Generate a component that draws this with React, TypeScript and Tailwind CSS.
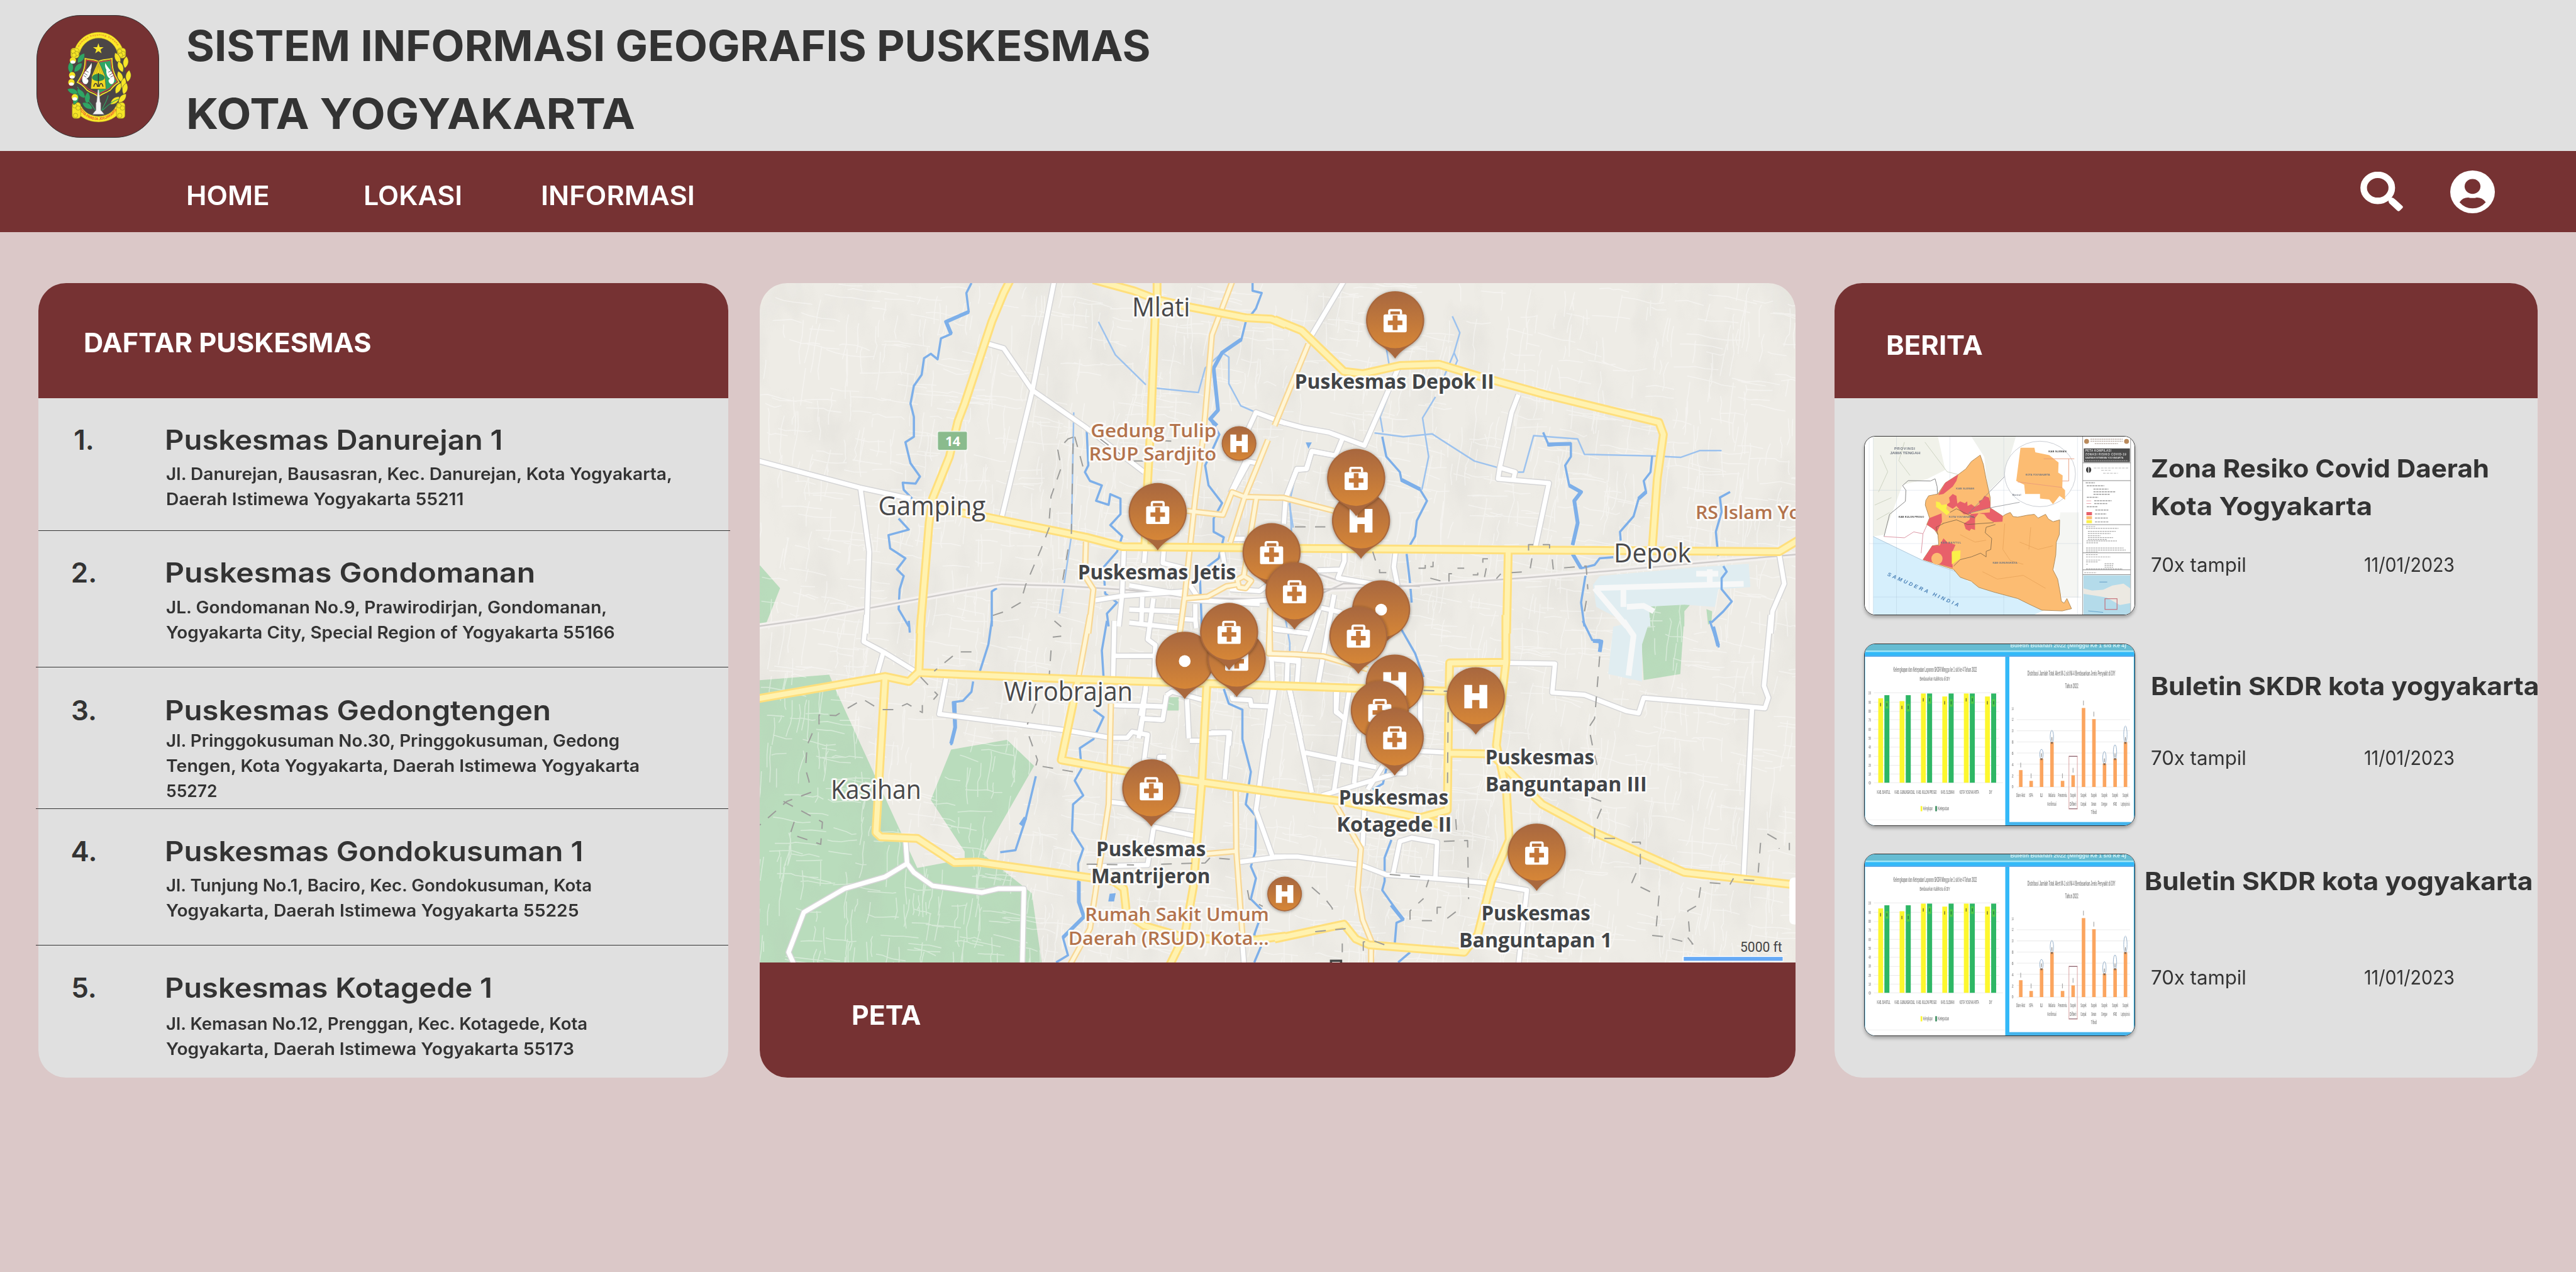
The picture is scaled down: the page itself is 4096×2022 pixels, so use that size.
import { useLayoutEffect, useRef, useState } from "react";

/* One line of text widened so that its ink spans `w` pixels. */
const FitText = ({ w, children }: { w: number; children: string }) => {
  const ref = useRef<HTMLDivElement>(null);
  const [scale, setScale] = useState(1);
  useLayoutEffect(() => {
    const ctx = document.createElement("canvas").getContext("2d");
    if (!ctx || !ref.current) return;
    const cs = getComputedStyle(ref.current);
    ctx.font = `${cs.fontWeight} ${cs.fontSize} Inter`;
    const m = ctx.measureText(children);
    setScale(w / (m.actualBoundingBoxRight + m.actualBoundingBoxLeft));
  }, [w, children]);
  return (
    <div ref={ref} className="w-max origin-left whitespace-nowrap" style={{ transform: `scaleX(${scale})` }}>
      {children}
    </div>
  );
};

/* ---------- emblem ---------- */

const Leaf = ({ x, y, r, fill = "#f5e427" }: { x: number; y: number; r: number; fill?: string }) => (
  <path
    d="M0,-32 C20,-12 18,14 0,32 C-18,14 -20,-12 0,-32 Z"
    transform={`translate(${x} ${y}) rotate(${r})`}
    fill={fill}
    stroke="#4a4640"
    strokeWidth="2"
  />
);

const Curl = ({ x, y, h }: { x: number; y: number; h: number }) => (
  <g fill="#f5e427" stroke="#8c8420" strokeWidth="2">
    <rect x={x - 22} y={y} width="46" height={h} rx="16" />
    <circle cx={x - 8} cy={y + 18} r="12" />
    <circle cx={x + 10} cy={y + 30} r="12" />
    <circle cx={x - 4} cy={y + h - 16} r="12" />
  </g>
);

const Emblem = () => (
  <svg viewBox="193 100 365 500" className="h-[148px] w-[108px]">
    <ellipse cx="378" cy="350" rx="146" ry="236" fill="#4b4646" />
    <path d="M252,196 C300,82 456,82 506,196 L480,222 C450,116 306,116 276,222 Z" fill="#fbe92a" stroke="#a99a20" strokeWidth="2" />
    <path d="M262,490 L286,510 C320,580 436,580 470,510 L494,490 L500,530 C450,614 306,614 254,530 Z" fill="#fbe92a" stroke="#a99a20" strokeWidth="2" />
    <path id="ribbonTop" d="M272,192 C312,108 444,108 484,192" fill="none" />
    <path id="ribbonBottom" d="M276,524 C312,602 440,602 478,524" fill="none" />
    <text fontFamily="Liberation Sans, sans-serif" fontSize="15" fontWeight="700" fill="#e8862c">
      <textPath href="#ribbonTop" textLength="250">mamayu hayuning bawana</textPath>
    </text>
    <text fontFamily="Liberation Sans, sans-serif" fontSize="20" fontWeight="700" fill="#ea4b2a">
      <textPath href="#ribbonBottom" textLength="244" lengthAdjust="spacingAndGlyphs">KOTA PRADJA JOGJAKARTA</textPath>
    </text>
    <Curl x={250} y={196} h={54} />
    <Curl x={500} y={196} h={54} />
    <Curl x={258} y={488} h={86} />
    <Curl x={496} y={488} h={86} />
    <path d="M377,170 L384,191 L405,191 L388,204 L394,224 L377,212 L360,224 L366,204 L348,191 L370,191 Z" fill="#fbe92a" />
    {[
      [480, 250, -25], [524, 272, 8], [496, 296, -22], [538, 346, 8], [494, 350, -20], [512, 386, 10],
      [484, 412, 25], [520, 414, 14], [506, 466, 40], [466, 478, 50],
    ].map(([x, y, r], i) => <Leaf key={i} x={x} y={y} r={r} />)}
    {[
      [284, 250, 35], [228, 300, 0], [268, 300, 40], [240, 428, -70], [284, 440, -40], [318, 464, 5], [318, 506, -60], [256, 470, 20],
    ].map(([x, y, r], i) => <Leaf key={i} x={x} y={y} r={r} fill="#2fa564" />)}
    {[[240, 266], [236, 346], [232, 384], [250, 464]].map(([x, y], i) => (
      <g key={i}>
        <circle cx={x} cy={y - 4} r="17" fill="#f5e427" />
        <ellipse cx={x} cy={y + 5} rx="13" ry="9" fill="#fff" />
      </g>
    ))}
    <path d="M264,404 C300,460 340,490 360,530 M486,470 C450,480 420,510 400,530 M430,450 C420,490 400,510 396,532" fill="none" stroke="#2fa564" strokeWidth="4" />
    <path d="M306,252 C330,260 355,255 377,268 C400,255 425,260 450,252 C450,300 456,330 488,380 C450,400 440,430 436,424 C415,440 390,440 377,460 C364,440 340,440 318,424 C310,420 300,395 264,380 C298,330 306,300 306,252 Z" fill="#4b4646" stroke="#f5e427" strokeWidth="6" />
    <path d="M377,272 C400,262 425,266 444,260 C445,305 450,335 478,376 C444,396 440,418 430,418 C410,430 388,432 377,448 Z" fill="#2fa564" />
    <path d="M312,260 C334,268 355,264 377,274 C400,264 425,268 444,260 C445,305 450,335 478,376 C444,396 438,418 430,416 C410,430 388,432 377,448 C364,432 342,430 324,416 C318,416 304,390 274,376 C306,335 312,300 312,260 Z" fill="none" stroke="#e03a3e" strokeWidth="4" />
    <path d="M340,276 C330,300 300,320 292,350 C286,366 292,392 312,390 C328,380 326,360 312,362 C332,352 336,330 336,312 C342,300 342,288 340,276 Z" fill="#fff" />
    <path d="M414,276 C424,300 452,320 460,350 C466,366 462,392 444,390 C428,380 428,360 442,362 C422,352 418,330 420,312 C412,300 412,288 414,276 Z" fill="#fff" />
    <path d="M300,330 L318,342 M298,344 L312,352 M306,316 L324,326 M454,330 L436,342 M458,344 L442,352 M448,316 L430,326" stroke="#4b4646" strokeWidth="3" />
    <path d="M377,264 L412,344 L418,416 L336,416 L342,344 Z" fill="#f0d822" stroke="#4b4646" strokeWidth="2" />
    <path d="M377,280 L400,336 M377,280 L354,336 M377,290 L388,336 M377,290 L366,336" stroke="#a3921d" strokeWidth="2" />
    <ellipse cx="377" cy="354" rx="34" ry="20" fill="#2b8a52" />
    <path d="M377,330 V404 M352,404 C356,380 370,380 372,404 M382,404 C384,380 398,380 402,404" fill="none" stroke="#3b3630" strokeWidth="5" />
    <path d="M374,420 L380,420 L386,486 L390,490 L390,530 L398,538 L408,552 L346,552 L356,538 L364,530 L364,490 L368,486 Z" fill="#f2f2f2" stroke="#8a8a8a" strokeWidth="2" />
  </svg>
);

/* ---------- map ---------- */

/* The map's line work is digitised in five sheets, each with its own local grid. */
const TILES: Record<string, string> = {
  a: "translate(1350 500) scale(.6059 .3954)",
  b: "translate(2280 500) scale(.6059 .3954)",
  c: "translate(1350 1110) scale(.6059 .5293)",
  d: "translate(2280 1110) scale(.6059 .5293)",
  e: "translate(2020 800) scale(.3333)",
};

type Layer = Record<string, string>;

const GREEN: Layer = {
  a: "M0,1265 L75,1395 L35,1550 L0,1568 Z",
  b: "M1105,1478 L1165,1460 L1230,1465 L1210,1500 L1210,1568 L1108,1568 Z M1275,1490 L1292,1500 L1290,1550 L1280,1560 Z",
  c: "M0,202 L220,182 L240,235 L480,835 L620,805 L620,780 L520,605 L580,435 L745,402 L825,490 L675,790 L818,920 L848,1160 L0,1160 Z M1213,258 H1252 V303 H1213 Z",
  d: "M1110,-20 L1210,-20 L1198,180 L1090,200 L1083,60 Z",
};
const AIRPORT: Layer = {
  b: "M960,1340 L1250,1300 L1400,1285 L1405,1390 L1310,1400 L1300,1480 L1210,1470 L1105,1478 L1110,1568 L1060,1568 L950,1480 L940,1380 Z",
  d: "M1000,20 L1110,-10 L1085,80 L1085,205 L985,180 Z",
};
const POND: Layer = { c: "M1048,922 L1066,920 L1061,948 L1044,948 Z", b: "M92,736 H110 L100,765 Z" };
const RUNWAY: Layer = {
  b: "M945,1395 L1385,1375 M945,1395 L1040,1568 M1030,1395 L1030,1480 M1245,1330 H1310 M1285,1310 V1390 M1040,1480 L1090,1475 L1120,1500",
  d: "M1030,0 L1060,50 L1045,185",
};
const RIVER: Layer = {
  a: "M640,15 L625,60 L632,145 L565,190 L580,245 L550,265 L540,360 L520,335 L500,355 L493,430 L470,480 L460,560 L470,620 L470,710 L445,735 L460,830 L488,890 L475,922 L437,918 L440,950 L465,990 M425,1080 L455,1130 L395,1155 L400,1215 L445,1260 L420,1310 L440,1340 L428,1400 L425,1490 L455,1568 M1470,15 L1470,50 L1497,60 L1480,130 L1450,190 L1437,270 L1380,330 L1355,400 L1368,590 L1345,630 L1372,700 L1330,840 L1340,930 L1380,1010 L1355,1080 L1355,1140 L1385,1165 L1370,1260 L1335,1300 M980,670 L985,840 L975,870 L990,910 L1025,930 L1008,1000 L1045,1018 L1050,970 L1080,990 L1080,1060 L1050,1110 L1085,1160 L1070,1230 L1030,1300 L1035,1420 L1070,1460 L1040,1510 L1045,1568 M715,1395 L700,1410 L700,1568 M1315,1360 L1320,1568",
  b: "M318,710 L330,800 L370,870 L375,910 L430,950 L450,1000 L420,1090 L415,1160 L400,1200 M390,1240 L400,1370 L405,1460 M793,690 L810,750 L875,740 L875,800 L858,840 L870,930 L905,960 L885,1000 L895,1100 L880,1200 M880,1240 L905,1305 L945,1290 L960,1260 L1000,1255 M920,1320 L905,1460 L915,1568 M1115,795 L1110,870 L1090,910 L1097,960 L1075,990 L1060,1070 L1020,1140 L1022,1180 M1345,960 L1315,985 L1320,1050 L1303,1140 L1310,1250 M1325,1295 L1335,1320 L1320,1350 L1320,1400 L1350,1455 L1325,1500 L1290,1550",
  c: "M455,0 L458,40 M700,0 L690,80 L665,170 M645,205 L640,240 L615,270 L585,275 L590,360 L580,420 M1040,0 L1025,100 L1030,190 M1000,300 L1030,325 L1000,400 L960,430 L965,500 L945,540 L970,590 L940,620 L937,710 L970,770 L955,820 L957,950 L972,1000 L910,1070 L925,1130 L890,1154 M1385,230 L1400,280 L1440,300 L1440,400 L1465,510 L1450,620 L1480,660 L1478,780 L1465,830 L1480,870 L1465,940 L1500,980 L1475,1060 L1495,1100 L1475,1154 M830,525 L800,670 L770,775 L725,782",
  d: "M375,30 L415,110 L440,190 M330,500 L320,550 L290,570 M345,740 L325,800 L325,880 L318,910 L380,1010 L360,1020 L355,1090 M400,1120 L365,1154 M910,0 L938,65 L960,65 L960,105 M1285,0 L1312,90",
};
const RIVER_WIDE: Layer = {
  a: "M1437,270 L1380,330 L1355,400 L1368,590 L1345,630 L1365,660 M632,145 L565,190 L580,245",
  b: "M375,905 L430,948 M805,745 L875,742 M870,930 L905,960 L885,1000 L895,1100 L880,1200 M1097,960 L1075,990 M880,1240 L905,1305",
  c: "M590,275 L592,360 L580,415 M785,690 L800,665 M957,880 L957,950 L972,1000 L910,1070",
  d: "M940,68 L965,70 L960,105 M345,960 L380,1010 M1295,20 L1310,85",
};
const STREAM: Layer = {
  a: "M942,600 L935,1160 L900,1510 M1015,190 L1065,340 L1155,475 M1185,490 L1310,510 L1330,400 L1380,330 L1400,350 L1400,470 L1435,570 L1480,600",
  b: "M525,165 L547,240 L530,330 L500,440 M530,330 L540,365 L530,400 M475,530 L437,625 L455,800 L435,950 M330,310 L340,400 M340,510 L312,620 L320,690 M295,693 L380,710 L465,697 L590,820 L660,850 M715,870 L735,870 L765,705 L895,720 L915,790 L1115,797 L1200,803 L1255,773 L1320,773 M60,900 L45,1000 L50,1140",
  e: "M835,900 L862,1050 L860,1260 M860,300 L880,430",
};
const MAJOR: Layer = {
  a: "M755,0 L735,60 L700,190 L620,560 L600,640 L575,800 L525,990 L515,1100 L488,1600 M1000,0 L1120,50 L1188,90 L1290,125 L1450,172 L1525,178 L1568,205 M1188,0 L1188,90 L1182,180 L1170,640 L1160,920 L1152,1200 M520,1030 L690,1075 L980,1165 L1085,1207 L1560,1214",
  b: "M0,180 L80,230 L205,415 L260,425 L370,388 L485,382 L600,435 L800,520 L1135,645 L1148,700 L1130,900 L1115,1220 M0,1214 L690,1222 L1490,1230 L1560,1165 M690,1222 L685,1600",
  c: "M0,265 L385,188 L455,205 L485,172 L492,-20 M485,175 L955,198 L1568,220 M955,198 L905,470 L1050,500 L1320,545 L1568,585 M1335,215 L1320,545 L1295,900 L1270,1060 L1225,1164 M385,190 L358,715 L372,730 L480,735 L590,817 L660,815 L990,868 L1060,880 L1090,905 L1098,990 L1150,1030 L1270,1070 L1450,1082 L1568,1065",
  d: "M0,218 L250,228 L515,238 M683,-20 L683,140 L655,420 L685,580 L693,740 L640,880 L600,1060 L560,1120 L280,1095 L240,1075 L205,1025 L0,1075 M515,238 L517,142 L683,140 M515,238 L510,640 L430,665 M510,447 L640,450 L790,620 L945,715 L1210,850 L1560,895 M0,580 L200,610 L430,665 L490,690",
};
const MINOR: Layer = {
  a: "M1412,0 L1350,250 L1325,700 L1300,1000 L1270,1430 L1255,1600 M978,1185 L975,1340 L1000,1400 L985,1600",
  b: "M100,290 L0,660",
  c: "M990,-20 L955,198 M1052,280 L1045,620 L990,1040 L930,1164 M1420,570 L1422,780 L1440,1060 M1422,778 L1335,787 M1520,0 L1522,108",
  d: "M180,620 L255,770 L245,910 L260,1010 L285,1080 L285,1164",
  e: "M745,-40 L680,120 L620,265 L542,510 M620,265 L552,240 L503,362 L310,340 M620,265 L830,270 L1100,340 M682,275 L615,690 L580,710 L590,750 L625,755 L655,715 L615,690 M580,735 L520,745 L420,800 L300,810 M757,860 L748,1105 L900,1110 L1040,1120 L1280,1190",
};
const STREET: Layer = {
  a: "M885,0 L820,500 L730,1070 M690,290 L735,310 L820,500 L975,665 L1150,870 M0,815 L310,940 L460,990 M312,940 L338,1230 L330,1600 M1568,650 L1480,600 L1450,700 M1485,830 L1450,820 L1405,965 M1090,1220 L1085,1420 L1075,1568 M1005,1450 L1085,1430 L1270,1410",
  b: "M207,0 L110,250 M365,400 L265,750 L160,690 L85,670 L0,635 M200,720 L180,795 L110,775 L95,855 L65,860 L30,1000 M720,520 L700,600 L665,850 L710,870 L705,905 M665,850 L660,900 L810,920 L770,1210 M1490,1240 L1505,1375 L1470,1500 L1465,1600",
  c: "M330,-20 L322,70 L380,105 L480,175 M380,105 L360,185 M565,195 L545,315 L920,370 L1050,395 L1100,395 L1115,375 L1160,385 L1150,470 L1195,480 L1195,460 L1215,460 M1060,285 L1205,290 M1205,335 L1145,330 L1155,220 M1145,330 L1138,380 M1062,0 L1058,200 M1060,118 L1180,118 M1340,380 L1400,378 L1388,535 M1285,405 L1325,405 M1175,695 L1295,725 M1050,612 L1300,645 M1530,230 L1480,640 L1530,800 L1568,797 M1530,800 L1430,815 M1438,1060 L1445,1164 M445,740 L450,820 L385,865 L265,905 L145,985 L100,1120 L120,1170 M450,820 L470,850 L525,895 L670,918 L720,905 L795,905 L790,1164 M985,830 L1160,825 L1178,700",
  d: "M1465,-20 L1445,220 L1458,260 L1448,295 L1090,260 L1075,312 L1040,305 L915,250 L820,242 L828,145 L690,142 M1410,290 L1385,865 M45,235 L110,580 M90,445 L300,495 M250,380 L235,550 M430,440 L510,445 M0,797 L70,797 L255,825 L330,858 L470,870 L620,885 L745,910 L720,1164 M350,855 L370,745 L405,733 L480,748 L475,870 M140,590 L360,515 L385,515 L385,490 M220,240 L175,580 M430,230 L430,430 M265,640 L260,760 M0,30 L100,42 M0,130 L70,138 M185,240 L182,305 L205,330 M320,490 L275,570",
  e: "M0,870 L280,880 M70,800 L65,940 M0,940 L270,970 M130,810 L100,1030 L140,1060 L135,1240 M0,1118 L130,1118 M85,555 L80,620 M185,555 L180,620 L300,650 M0,740 L290,790 M290,920 L355,925 L355,840 M355,925 L360,970 M760,970 L970,1000 M1020,870 L940,1100 M1100,790 L1010,1290 M1030,860 L1140,885 M1155,560 L1155,610 L1120,700 L1360,740 M1430,560 L1420,640 L1440,740 M1010,660 L1130,655 M555,490 L620,490 M640,80 L555,235 M750,1130 L910,1140 L900,1270 M850,1140 L845,1270 M765,1140 L770,1270 M200,1330 L180,1460 L70,1455 L50,1560 M70,1385 L190,1390 M90,1290 L60,1440 M200,1330 L230,1310 L400,1355 M310,1350 L320,1560 M550,1330 L555,1350 L650,1355 L655,1385 L775,1390 M780,1300 L740,1560 M860,1300 L920,1560 M1110,1310 L1110,1420 L1160,1455 M980,20 L950,115 L900,115 L840,270 L830,410 M980,20 L1110,45 M500,560 L510,620 M540,760 L700,770 L740,740 M300,700 L380,820 M560,830 L740,820 M440,1530 L540,1530 L535,1600 M300,815 L700,840",
};
const RAIL: Layer = {
  a: "M0,1570 L180,1530 L620,1405 L730,1377 L920,1385 L1120,1405 L1280,1437 L1568,1448",
  b: "M-20,1440 L140,1400 L400,1385 L740,1348 L980,1318 L1560,1240",
  e: "M0,765 L310,805 L740,820 M1040,780 L1150,730 L1560,745 M1020,680 L1140,720",
};
const TRAIL: Layer = {
  a: "M940,712 L925,720 L895,770 L905,850 L875,980 L870,1080 M870,1120 L845,1220 L800,1380 L785,1460 L740,1500 L680,1530 M945,710 L970,850 M940,740 L935,1150 M925,1220 L905,1400 M1020,720 L1080,790 M1120,820 L1150,820 M1205,728 L1230,730",
  b: "M60,1118 H150 M750,1225 V1198 H812 V1225 M755,1305 L760,1260 M820,1265 L823,1310 M855,1303 L880,1300 L920,1295 L925,1400 M310,1310 V1325 H330 M425,1305 H445 V1290 M460,1298 H468 V1275 M515,1365 V1330 L525,1330 M460,1350 L490,1362 M615,1280 V1262 H630 M585,1335 H600 V1325 M620,1345 L625,1305 M655,1352 L668,1330 M700,1325 L730,1322 M290,1230 L298,1270 M540,1305 H560 M915,1500 L922,1440",
  c: "M640,105 L600,105 L530,170 M490,190 L540,250 L525,270 M190,350 V318 L240,320 L275,295 L320,265 L370,300 L410,300 L450,280 L495,310 V280 M170,380 L155,420 L150,500 L160,540 L165,580 L95,610 L15,690 M85,610 L200,680 L195,755 L105,720 L125,650 M885,0 L905,20 M880,55 L905,52 M875,100 L870,180 M830,280 L805,350 M810,390 L835,470 L830,490 M850,492 L940,510 M980,822 L1120,825 M1200,822 L1330,818 L1345,800 L1400,805 L1430,810 M1455,910 L1460,940 L1500,965",
  d: "M513,240 L510,640 M440,235 L510,238 M960,120 L945,330 L928,360 L940,430 L955,500 M500,745 L570,742 L573,940 M535,670 L538,720 M935,597 L965,610 M965,635 L950,675 M945,700 V735 H1025 M1055,748 H1080 V820 L1055,885 L1135,930 L1125,1060 M1115,1063 L1150,1067 L1235,1092 L1220,1070 M1435,750 L1428,850 M1455,720 L1485,740 L1490,770 M1520,750 V775 M1285,885 L1345,890 L1355,870 M1385,875 L1420,877 M1258,900 L1250,960 L1220,980 L1225,1050 M110,900 L150,940 L170,970 L175,1000 M400,1010 V980 L440,938 M480,990 V968 H500 M510,1005 L550,970 M435,1013 H465 M120,1050 L210,1040 M340,857 L430,865 M200,1090 V1120 M262,1115 V1085 L290,1080 L350,1105 M455,875 L448,900",
};

const Strokes = ({ layer, color, width, dash }: { layer: Layer; color: string; width: number; dash?: string }) => (
  <g fill="none" stroke={color} strokeWidth={width} strokeDasharray={dash} strokeLinejoin="round">
    {Object.entries(layer).map(([k, d]) => (
      <path key={k} d={d} transform={TILES[k]} vectorEffect="non-scaling-stroke" />
    ))}
  </g>
);
const Areas = ({ layer, color }: { layer: Layer; color: string }) => (
  <g fill={color}>
    {Object.entries(layer).map(([k, d]) => <path key={k} d={d} transform={TILES[k]} />)}
  </g>
);

/* faint residential streets */
const lanes = (() => {
  let s = 7;
  const rnd = () => (s = (s * 16807) % 2147483647) / 2147483647;
  let d = "";
  for (let i = 0; i < 2400; i++) {
    let x = 1359 + rnd() * 1853;
    let y = 506 + rnd() * 1215;
    const vertical = rnd() < 0.52;
    d += `M${x.toFixed(0)},${y.toFixed(0)}`;
    const n = 2 + Math.floor(rnd() * 3);
    for (let j = 0; j < n; j++) {
      const step = 6 + rnd() * 22;
      x += vertical ? -step * 0.1 + (rnd() - 0.5) * 8 : step;
      y += vertical ? step : step * 0.12 + (rnd() - 0.5) * 8;
      d += `L${x.toFixed(0)},${y.toFixed(0)}`;
    }
  }
  return d;
})();

type Kind = "kit" | "h" | "dot";
const PINS: [number, number, Kind][] = [
  [2495.7, 573, "kit"], [2434.7, 931, "h"], [2426, 855, "kit"], [2071, 916, "kit"],
  [2274.7, 987.7, "kit"], [2315.7, 1057.7, "kit"], [2470.7, 1090, "dot"], [2430, 1137, "kit"],
  [2119.3, 1182, "dot"], [2212.3, 1178.3, "kit"], [2198.7, 1130.3, "kit"], [2495, 1222.7, "h"],
  [2468.3, 1270, "kit"], [2495, 1319, "kit"], [2640, 1245.5, "h"], [2059.5, 1410, "kit"], [2749, 1525, "kit"],
];

const H = "M-20.5,-21 H-6.5 V-6 H6.5 V-21 H20.5 V21 H6.5 V6 H-6.5 V21 H-20.5 Z";

const Pin = ({ x, y, kind }: { x: number; y: number; kind: Kind }) => (
  <g transform={`translate(${x} ${y})`}>
    <path d="M0,68 C-8,56 -18,50 -27,44 A52,52 0 1 1 27,44 C18,50 8,56 0,68 Z" fill="#a9683d" filter="url(#pinShadow)" />
    <circle r="49.5" fill="url(#pin)" />
    {kind === "dot" && <circle r="10.5" fill="#fff" />}
    {kind === "h" && <path d={H} fill="#fff" />}
    {kind === "kit" && (
      <>
        <path d="M-10.5,-11 V-16 Q-10.5,-18.5 -8,-18.5 H8 Q10.5,-18.5 10.5,-16 V-11" fill="none" stroke="#fff" strokeWidth="4" />
        <rect x="-20.7" y="-11" width="41.4" height="32" rx="3" fill="#fff" />
        <path d="M-4.3,-9 H4.3 V0 H13 V8 H4.3 V17 H-4.3 V8 H-13 V0 H-4.3 Z" fill="#c4783a" />
      </>
    )}
  </g>
);

type Label = [string, number, number, number];
const PLACES: Label[] = [
  ["Mlati", 2025, 2129, 565.6], ["Gamping", 1571, 1763, 921], ["Depok", 2887, 3025, 1006],
  ["Wirobrajan", 1796, 2026, 1253], ["Kasihan", 1486, 1648, 1429],
];
const CLINICS: Label[] = [
  ["Puskesmas Jetis", 1928, 2211, 1036], ["Puskesmas Depok II", 2316, 2673, 695],
  ["Puskesmas", 1961, 2157, 1531], ["Mantrijeron", 1952, 2165, 1579.5],
  ["Puskesmas", 2657, 2852, 1366.7], ["Banguntapan III", 2657, 2946, 1415.4],
  ["Puskesmas", 2395, 2591, 1439], ["Kotagede II", 2391, 2597, 1487.4],
  ["Puskesmas", 2650, 2845, 1646], ["Banguntapan 1", 2610, 2884, 1694],
];
const HOSPITALS: Label[] = [
  ["Gedung Tulip", 1951, 2176, 781.5], ["RSUP Sardjito", 1948, 2176, 823.4],
  ["Rumah Sakit Umum", 1941, 2270, 1647], ["Daerah (RSUD) Kota...", 1911, 2270, 1690],
  ["RS Islam Yo", 3033, 3221, 928],
];

const Labels = ({ items, size, weight, color }: { items: Label[]; size: number; weight: number; color: string }) => (
  <g fontFamily="'Open Sans', 'Noto Sans', sans-serif" fontSize={size} fontWeight={weight} fill={color} stroke="#fbfaf8" strokeWidth="7" strokeLinejoin="round" paintOrder="stroke">
    {items.map(([t, x1, x2, y], i) => (
      <text key={i} x={x1} y={y} textLength={x2 - x1} lengthAdjust="spacingAndGlyphs">{t}</text>
    ))}
  </g>
);

const CityMap = () => (
  <svg viewBox="1359 506 1853 1215" preserveAspectRatio="none" className="block h-[1080px] w-full rounded-t-[44px]">
    <defs>
      <linearGradient id="pin" x1="0" y1="0" x2="0" y2="1">
        <stop offset="0" stopColor="#a9683f" />
        <stop offset="1" stopColor="#d68637" />
      </linearGradient>
      <filter id="pinShadow" x="-30%" y="-30%" width="160%" height="160%">
        <feDropShadow dx="0" dy="1" stdDeviation="3" floodColor="#000" floodOpacity="0.4" />
      </filter>
      <filter id="relief" x="0" y="0" width="100%" height="100%">
        <feTurbulence type="fractalNoise" baseFrequency="0.012 0.007" numOctaves="4" seed="4" />
        <feColorMatrix values="0 0 0 0 0.45  0 0 0 0 0.44  0 0 0 0 0.42  1.6 0 0 0 -0.78" />
      </filter>
    </defs>
    <rect x="1359" y="506" width="1853" height="1215" fill="#eeece6" />
    <Areas layer={GREEN} color="#b9dcbc" />
    <rect x="1359" y="506" width="1853" height="1215" filter="url(#relief)" opacity="0.2" />
    <path d={lanes} fill="none" stroke="#fff" strokeOpacity="0.4" strokeWidth="1.8" />
    <Areas layer={AIRPORT} color="#e0edf1" />
    <Strokes layer={RUNWAY} color="#f7f8f8" width={9} />
    <Strokes layer={STREAM} color="#9cc2ee" width={2.5} />
    <Strokes layer={RIVER} color="#7dafe9" width={3.5} />
    <Strokes layer={RIVER_WIDE} color="#7dafe9" width={6} />
    <Areas layer={POND} color="#7dafe9" />
    <Strokes layer={RAIL} color="#f4f1ef" width={9} />
    <Strokes layer={RAIL} color="#cfcccb" width={2.5} />
    <Strokes layer={STREET} color="#d5d5d6" width={10} />
    <Strokes layer={STREET} color="#ffffff" width={7} />
    <Strokes layer={MINOR} color="#f8d795" width={10} />
    <Strokes layer={MINOR} color="#fff6d6" width={5.5} />
    <Strokes layer={MAJOR} color="#ffdf7c" width={14} />
    <Strokes layer={MAJOR} color="#fff2b0" width={8} />
    <Strokes layer={TRAIL} color="#9c9c9a" width={2} dash="17 15" />
    <rect x="1677" y="771" width="53.5" height="34" rx="3" fill="#8abb8d" stroke="#fff" strokeOpacity="0.7" strokeWidth="2" />
    <text x="1691" y="797" textLength="27" fontFamily="'Open Sans', sans-serif" fontSize="24" fontWeight="700" fill="#fff">14</text>
    <Labels items={HOSPITALS} size={33} weight={600} color="#b3734c" />
    {[[2216.5, 792.8], [2298, 1598.5]].map(([x, y]) => (
      <g key={x} transform={`translate(${x} ${y})`}>
        <circle r="31" fill="#a9683d" filter="url(#pinShadow)" />
        <circle r="29" fill="url(#pin)" />
        <path d={H} transform="scale(.76)" fill="#fff" />
      </g>
    ))}
    {PINS.map(([x, y, k], i) => <Pin key={i} x={x} y={y} kind={k} />)}
    <Labels items={PLACES} size={48} weight={400} color="#48484a" />
    <Labels items={CLINICS} size={36} weight={700} color="#414447" />
    <path d="M2381,1721 V1718 H2399 V1721" fill="none" stroke="#444" strokeWidth="4" />
    <rect x="3201" y="1569" width="24" height="84" rx="8" fill="#fff" />
    <text x="3113" y="1702" textLength="75" lengthAdjust="spacingAndGlyphs" fontFamily="Roboto, sans-serif" fontSize="25" fill="#444">5000 ft</text>
    <rect x="3010" y="1709.5" width="180" height="10" fill="#fff" />
    <rect x="3012" y="1711" width="177" height="7" fill="#66a9f5" />
  </svg>
);

/* ---------- news thumbnails ---------- */

const RiskMap = () => (
  <svg viewBox="46 30 1453 962" preserveAspectRatio="none" className="block size-full">
    <defs><filter id="soft"><feGaussianBlur stdDeviation="2.2" /></filter></defs>
    <rect x="46" y="30" width="1453" height="962" fill="#fff" />
    <g filter="url(#soft)">
      <path d="M92,30 H440 L480,210 L380,260 L250,290 L150,560 L92,570 Z" fill="#f1f2ea" />
      <path d="M620,30 H860 L800,240 L710,330 L690,140 Z" fill="#eff1ec" />
      <path d="M1100,440 H1200 V900 L1110,900 L1060,720 Z" fill="#f5f6f3" />
      <path d="M92,570 L360,700 L540,760 L600,810 L900,910 L1010,970 L960,992 H92 Z" fill="#d6effc" />
      <path d="M92,570 L360,700 L540,760" fill="none" stroke="#a9c3d6" strokeWidth="3" />
      <path d="M70,30 V992 M92,30 V992 M1192,30 V992 M217,30 V992 M505,30 V992 M795,30 V992 M70,320 H1215 M70,608 H1215 M92,897 H1215" stroke="#8aa0b8" strokeOpacity="0.35" strokeWidth="2" fill="none" />
      <path d="M370,60 L490,220 L550,235 M130,130 L170,220 L120,330 M260,60 L230,160 L290,240 M100,400 L190,360 M110,480 L180,440" stroke="#c9cfbd" strokeWidth="3" fill="none" />
      <path d="M150,570 L180,450 L265,380 L268,320 L250,295 L280,268 L400,270 L425,258 L436,300 L438,340" fill="none" stroke="#777" strokeWidth="3" />
      <path d="M150,570 L260,577 L310,545 L360,555 L385,500 M360,555 L350,660" fill="none" stroke="#d98a9a" strokeWidth="3" />
      <path d="M668,130 L685,180 L700,260 L722,360 L722,415 L790,460 L805,450 L830,440 L845,462 L870,465 L920,455 L960,450 L980,470 L1020,450 L1035,475 L1060,490 L1096,480 L1094,560 L1078,600 L1075,670 L1060,750 L1085,800 L1100,880 L1105,920 L1120,930 L1135,905 L1160,960 L1110,972 L1000,968 L930,935 L870,905 L740,870 L660,845 L620,812 L560,790 L525,748 L360,695 L410,620 L445,615 L440,560 L420,530 L380,505 L395,470 L372,400 L375,375 L390,350 L440,340 L480,280 L550,235 L590,205 L620,165 Z" fill="#fcbc72" stroke="#a98450" strokeWidth="3" />
      <path d="M550,235 L480,280 L442,345 L470,340 L520,300 L540,270 Z M520,340 L500,360 L505,385 L485,400 L520,420 L540,405 L560,430 L580,450 L600,450 L720,440 L722,390 L715,360 L690,350 L680,372 L660,378 L665,395 L640,410 L620,395 L600,405 L598,380 L585,390 L560,380 L545,392 L540,350 Z M722,415 L790,460 L788,490 L740,492 L705,470 L690,450 L660,445 L640,470 L640,535 L620,528 L610,540 L590,530 L580,500 L610,480 L620,440 Z M395,470 L460,445 L462,490 L435,545 L382,505 Z M470,580 L490,600 L535,615 L515,660 L520,740 L360,695 L410,620 L450,618 Z" fill="#e8606a" />
      <ellipse cx="435" cy="690" rx="30" ry="32" fill="#fcbc72" />
      <path d="M430,380 L450,385 L460,400 L490,395 L485,420 L505,440 L488,455 L470,440 L445,420 L430,410 Z M515,650 L562,645 L560,690 L515,720 Z" fill="#fbf04a" />
      <path d="M465,500 L540,480 L600,505 L740,495 M750,505 L700,520 L695,550 L730,580 L725,640 L700,650 L700,680 L670,660 L620,680 L560,695 L525,730 M440,560 L430,520 L470,500 M505,440 L540,420 L640,470" fill="none" stroke="#6d5a40" strokeWidth="2.5" />
      <path d="M560,560 L640,600 L700,590 M800,500 L790,640 L830,700 L900,720 M880,600 L980,640 L1060,620 M680,760 L760,800 L900,780 L1020,850 M940,520 L930,640" fill="none" stroke="#e9a65c" strokeWidth="3" />
      <path d="M605,445 L800,245 M605,445 L720,415 L880,385" stroke="#7d8086" strokeWidth="2.5" fill="none" />
      <ellipse cx="990" cy="232" rx="191" ry="177" fill="#fff" fillOpacity="0.9" stroke="#b5bac2" strokeWidth="2.5" />
      <path d="M885,90 L960,90 L965,115 L1040,130 L1090,170 L1088,225 L1112,240 L1110,305 L1125,320 L1125,372 L1095,350 L1060,395 L1040,370 L990,365 L990,340 L910,340 L905,290 L862,270 Z" fill="#fcbc72" />
      <path d="M870,275 L1110,305 M1010,150 H1175 M1145,150 V270 H1110" fill="none" stroke="#e89a7a" strokeWidth="3" />
      <g fontFamily="Liberation Sans, sans-serif" fontWeight="700" fill="#6f7580">
        <text x="205" y="100" fontSize="20" textLength="112">PROVINSI</text>
        <text x="182" y="126" fontSize="20" textLength="164" lengthAdjust="spacingAndGlyphs">JAWA TENGAH</text>
        <text x="228" y="470" fontSize="14" fill="#444" textLength="138" lengthAdjust="spacingAndGlyphs">KAB KULON PROGO</text>
        <text x="538" y="314" fontSize="14" textLength="98">KAB SLEMAN</text>
        <text x="500" y="470" fontSize="14" textLength="135" lengthAdjust="spacingAndGlyphs">KOTA YOGYAKARTA</text>
        <text x="455" y="608" fontSize="14" textLength="110">KAB BANTUL</text>
        <text x="735" y="715" fontSize="14" textLength="135" lengthAdjust="spacingAndGlyphs">KAB GUNUNGKIDUL</text>
        <text x="912" y="242" fontSize="14" textLength="132" lengthAdjust="spacingAndGlyphs">KOTA YOGYAKARTA</text>
        <text x="1036" y="114" fontSize="14" fill="#444" textLength="96">KAB SLEMAN</text>
        <text x="842" y="350" fontSize="13" textLength="46">Bantul</text>
      </g>
      <text transform="translate(166 780) rotate(24)" fontFamily="Liberation Sans, sans-serif" fontStyle="italic" fontSize="28" fontWeight="700" fill="#4d83b8" textLength="418">SAMUDERA HINDIA</text>
      <rect x="1222" y="30" width="254" height="962" fill="#fff" />
      <path d="M1220,30 V992 M1478,30 V992" stroke="#8d8d8d" strokeWidth="3" />
      <circle cx="1241" cy="56" r="13" fill="#b98a5c" />
      <circle cx="1456" cy="56" r="13" fill="#b98a5c" />
      <path d="M1262,44 H1436 M1262,55 H1436 M1285,68 H1410" stroke="#b5a8a0" strokeWidth="4" strokeDasharray="9 3" />
      <rect x="1226" y="94" width="248" height="74" fill="#4a4a4a" />
      <g fontFamily="Liberation Sans, sans-serif" fontWeight="700" fill="#ddd">
        <text x="1234" y="112" fontSize="15" textLength="140">PETA KOMPILASI</text>
        <text x="1234" y="131" fontSize="15" textLength="220">ZONASI RISIKO COVID-19</text>
        <text x="1234" y="148" fontSize="13" textLength="205" lengthAdjust="spacingAndGlyphs">DAERAH ISTIMEWA YOGYAKARTA</text>
      </g>
      <path d="M1232,160 H1465" stroke="#ccc" strokeWidth="3" strokeDasharray="7 3" />
      <ellipse cx="1252" cy="210" rx="14" ry="16" fill="#3c3c3c" />
      <path d="M1252,186 V232" stroke="#fff" strokeWidth="4" />
      <path d="M1280,200 H1465 M1320,212 H1370 M1330,228 H1410" stroke="#b0b0b0" strokeWidth="3" strokeDasharray="14 5" />
      <path d="M1220,268 H1478 M1220,506 H1478 M1220,658 H1478 M1220,750 H1478 M1220,776 H1478 M1220,172 H1478" stroke="#7d7d7d" strokeWidth="3" />
      <path d="M1236,280 H1286 M1242,296 H1336 M1278,314 H1358 M1278,328 H1396 M1278,342 H1368 M1242,358 H1304 M1282,377 H1376 M1282,392 H1352 M1242,409 H1300 M1288,427 H1358 M1286,448 H1348 M1286,470 H1355 M1286,491 H1358" stroke="#9c9c9c" strokeWidth="5" strokeDasharray="12 3" />
      <path d="M1240,377 H1266 M1240,392 H1266" stroke="#e59ca5" strokeWidth="3" />
      <rect x="1240" y="438" width="30" height="17" fill="#e8606a" />
      <rect x="1240" y="460" width="30" height="17" fill="#fcbc72" />
      <rect x="1240" y="482" width="30" height="16" fill="#fbf04a" />
      <path d="M1238,516 H1290 M1238,526 H1412 M1248,542 H1398 M1248,554 H1370 M1248,566 H1316 M1248,576 H1384 M1248,586 H1350 M1240,594 H1404 M1240,604 H1304 M1238,632 H1440 M1238,643 H1452 M1238,653 H1300 M1238,668 H1300 M1238,680 H1370 M1238,697 H1318 M1238,707 H1300 M1238,720 H1250 M1338,717 H1386 M1338,727 H1384 M1338,737 H1384 M1238,745 H1435 M1228,766 H1294" stroke="#a8a8a8" strokeWidth="4" strokeDasharray="10 3" />
      <rect x="1224" y="780" width="252" height="212" fill="#b4dbea" />
      <path d="M1224,850 L1270,862 L1330,858 L1380,835 L1440,825 L1476,850 V930 L1420,940 L1350,900 L1290,890 L1224,880 Z" fill="#ece9e2" />
      <rect x="1340" y="906" width="65" height="58" fill="none" stroke="#c5707a" strokeWidth="4" />
      <path d="M1310,816 H1352" stroke="#6fa6cc" strokeWidth="4" />
      <path d="M1250,972 L1330,980" stroke="#5b9bc8" strokeWidth="3" />
    </g>
  </svg>
);

const PAIRS = [
  [119, 325, 152, 308], [234, 340, 267, 308], [349, 299, 382, 299],
  [464, 315, 498, 299], [580, 299, 612, 299], [694, 315, 727, 299],
];
const ALERTS: [number, number, number][] = [
  [886, 712, 0], [942, 770, 0], [998, 650, 600], [1054, 562, 498], [1111, 770, 0], [1168, 740, 0],
  [1224, 377, 0], [1280, 437, 0], [1337, 677, 612], [1394, 650, 576], [1450, 562, 474],
];
const ALERT_NAMES = [
  ["Diare Akut"], ["ISPA"], ["ILI"], ["Malaria", "Konfirmasi"], ["Pneumonia"], ["Suspek", "Difteri"],
  ["Suspek", "Campak"], ["Suspek", "Demam", "Tifoid"], ["Suspek", "Dengue"], ["Suspek", "HFMD"], ["Suspek", "Leptospirosis"],
];
const AREAS: [string, number, number][] = [
  ["KAB. BANTUL", 112, 184], ["KAB. GUNUNGKIDUL", 207, 317], ["KAB. KULON PROGO", 325, 434],
  ["KAB. SLEMAN", 456, 529], ["KOTA YOGYAKARTA", 557, 662], ["DIY", 716, 732],
];

const Bulletin = () => (
  <svg viewBox="46 33 1453 977" preserveAspectRatio="none" className="block size-full">
    <defs><filter id="haze"><feGaussianBlur stdDeviation="1.8" /></filter></defs>
    <rect x="46" y="33" width="1453" height="977" fill="#33b9f8" />
    <g filter="url(#haze)">
      <rect x="30" y="20" width="1490" height="48" fill="#66bcd2" />
      <rect x="30" y="67" width="1490" height="8" fill="#a5e6f5" />
      <rect x="30" y="95" width="1490" height="6" fill="#5ea8ea" />
      <text x="830" y="49" fontFamily="Liberation Sans, sans-serif" fontWeight="700" fontSize="28" fill="#d5f3f8" textLength="625" lengthAdjust="spacingAndGlyphs">Buletin Bulanan 2022 (Minggu Ke 1 s/d Ke 4)</text>
      <rect x="48" y="101" width="755" height="909" fill="#fff" />
      <rect x="825" y="101" width="670" height="892" fill="#fff" />
      <rect x="825" y="992" width="670" height="18" fill="#45b4ec" />
      <path d="M95,295 H770 M95,346 H770 M95,396 H770 M95,440 H770 M95,492 H770 M95,540 H770 M95,588 H770 M95,638 H770 M95,686 H770 M95,733 H770 M95,780 H790 M865,440 H1475 M865,500 H1475 M865,560 H1475 M865,620 H1475 M865,680 H1475 M865,740 H1475 M865,803 H1475" stroke="#dcdcdc" strokeWidth="2" />
      <path d="M60,980 H800" stroke="#e6e6e6" strokeWidth="2" />
      {PAIRS.map(([x1, y1, x2, y2]) => (
        <g key={x1}>
          <rect x={x1} y={y1} width="26" height={780 - y1} fill="#fdf72e" />
          <rect x={x2} y={y2} width="27" height={780 - y2} fill="#2fb765" />
          <rect x={x2 + 5} y={y1 + 15} width="17" height="40" fill="#4fc94c" />
          <rect x={x1 + 10} y={y1 + 25} width="5" height="18" fill="#7d7a2a" />
          <rect x={x2 + 11} y={y1 + 25} width="5" height="18" fill="#1f7a46" />
        </g>
      ))}
      {ALERTS.map(([x, y, c]) => (
        <g key={x}>
          <rect x={x - 9} y={y} width="19" height={803 - y} fill="#fba55f" />
          {c > 0 ? (
            <>
              <ellipse cx={x} cy={(c + y) / 2 + 2} rx="9" ry={(y - c) / 2 + 2} fill="none" stroke="#8ba8c4" strokeWidth="3" />
              <rect x={x - 2} y={y - 28} width="4" height="20" fill="#8a8a8a" />
              <rect x={x - 5} y={y - 2} width="10" height="10" fill="#8c6a50" />
            </>
          ) : (
            <rect x={x - 2} y={y - 40} width="4" height="26" fill="#a9a9a9" />
          )}
        </g>
      ))}
      <rect x="1146" y="637" width="45" height="285" fill="none" stroke="#d79a9a" strokeWidth="3" />
      <path d="M1146,638 H1191 M1146,920 H1191" stroke="#8f6f7b" strokeWidth="4" />
      <g fontFamily="Liberation Sans, sans-serif" fontWeight="700" fill="#8a8a8a" fontSize="30">
        <text x="200" y="181" fontSize="34" textLength="450" lengthAdjust="spacingAndGlyphs">Kelengkapan dan Ketepatan Laporan SKDR Minggu ke 1 s/d ke 4 Tahun 2022</text>
        <text x="342" y="230" fontSize="30" textLength="163" lengthAdjust="spacingAndGlyphs">Berdasarkan Kab/Kota di DIY</text>
        <text x="922" y="203" fontSize="40" textLength="474" lengthAdjust="spacingAndGlyphs">Distribusi Jumlah Total Alert M-1 s/d M-4 Berdasarkan Jenis Penyakit di DIY</text>
        <text x="1126" y="271" fontSize="38" textLength="70" lengthAdjust="spacingAndGlyphs">Tahun 2022</text>
        {AREAS.map(([t, a, b]) => <text key={t} x={a} y="842" fontSize="28" textLength={b - a} lengthAdjust="spacingAndGlyphs">{t}</text>)}
        {ALERT_NAMES.map((ls, i) => ls.map((l, j) => (
          <text key={i + l} x={ALERTS[i][0] - Math.min(24, l.length * 2.6)} y={859 + j * 45} fontSize="28" textLength={Math.min(48, l.length * 5.2)} lengthAdjust="spacingAndGlyphs">{l}</text>
        )))}
        {[100, 90, 80, 70, 60, 50, 40, 30, 20, 10, 0].map((n, i) => (
          <text key={n} x="66" y={306 + i * 48.4} fontSize="24" textLength="14" lengthAdjust="spacingAndGlyphs" fill="#999">{n}</text>
        ))}
        {[14, 12, 10, 8, 6, 4, 2, 0].map((n, i) => (
          <text key={n} x="838" y={388 + i * 60.5} fontSize="24" textLength="10" lengthAdjust="spacingAndGlyphs" fill="#999">{n}</text>
        ))}
        <text x="360" y="928" textLength="52" lengthAdjust="spacingAndGlyphs">Kelengkapan</text>
        <text x="440" y="928" textLength="60" lengthAdjust="spacingAndGlyphs">Ketepatan</text>
      </g>
      <rect x="347" y="906" width="9" height="28" fill="#fdf72e" />
      <rect x="426" y="906" width="9" height="28" fill="#3f8f62" />
    </g>
  </svg>
);

/* ---------- data ---------- */

type Line = [string, number];
type Row = { n: string; h: string; pt: string; mt: string; title: Line; lines: Line[] };

const CLINIC_ROWS: Row[] = [
  { n: "1.", h: "h-[210px]", pt: "pt-[36px]", mt: "mt-1", title: ["Puskesmas Danurejan 1", 598 * 0.8889], lines: [["Jl. Danurejan, Bausasran, Kec. Danurejan, Kota Yogyakarta,", 805.2], ["Daerah Istimewa Yogyakarta 55211", 471]] },
  { n: "2.", h: "h-[216px]", pt: "pt-[36px]", mt: "mt-[5px]", title: ["Puskesmas Gondomanan", 582.7], lines: [["JL. Gondomanan No.9, Prawirodirjan, Gondomanan,", 700.4], ["Yogyakarta City, Special Region of Yogyakarta 55166", 713.3]] },
  { n: "3.", h: "h-[224px]", pt: "pt-[38px]", mt: "-mt-0.5", title: ["Puskesmas Gedongtengen", 607.7], lines: [["Jl. Pringgokusuman No.30, Pringgokusuman, Gedong", 720.1], ["Tengen, Kota Yogyakarta, Daerah Istimewa Yogyakarta", 752], ["55272", 79]] },
  { n: "4.", h: "h-[216px]", pt: "pt-[37px]", mt: "mt-1", title: ["Puskesmas Gondokusuman 1", 659.4], lines: [["Jl. Tunjung No.1, Baciro, Kec. Gondokusuman, Kota", 677.6], ["Yogyakarta, Daerah Istimewa Yogyakarta 55225", 656.3]] },
  { n: "5.", h: "h-[210px]", pt: "pt-[37px]", mt: "mt-[7px]", title: ["Puskesmas Kotagede 1", 515], lines: [["Jl. Kemasan No.12, Prenggan, Kec. Kotagede, Kota", 670.7], ["Yogyakarta, Daerah Istimewa Yogyakarta 55173", 648.7]] },
];

const NEWS = [
  { Art: RiskMap, row: "pt-[60px]", box: "h-[285px]", pt: "pt-[22px]", ml: "", mt: "mt-10", title: [["Zona Resiko Covid Daerah", 534], ["Kota Yogyakarta", 347.5]] as Line[] },
  { Art: Bulletin, row: "pt-[45px]", box: "h-[290px]", pt: "pt-[38px]", ml: "", mt: "mt-[61px]", title: [["Buletin SKDR kota yogyakarta", 613]] as Line[] },
  { Art: Bulletin, row: "pt-11", box: "h-[290px]", pt: "pt-[14px]", ml: "-ml-2.5", mt: "mt-[100px]", title: [["Buletin SKDR kota yogyakarta", 613]] as Line[] },
];

const MENU: Line[] = [["HOME", 127], ["LOKASI", 151.5], ["INFORMASI", 239]];

export default function App() {
  return (
    <div className="flex h-[2022px] w-[4096px] flex-col overflow-hidden bg-[#dbc8c8] font-['Inter',sans-serif] text-[#333]">
      <header className="flex h-[240px] shrink-0 bg-[#e0e0e0] pl-[58px] pt-6">
        <div className="flex size-[195px] items-center justify-center rounded-[70px] border border-[#333] bg-[#763233]">
          <Emblem />
        </div>
        <h1 className="-mt-1.5 ml-[43px] text-[68px] font-bold leading-[108.4px]">
          <FitText w={1529}>SISTEM INFORMASI GEOGRAFIS PUSKESMAS</FitText>
          <FitText w={709}>KOTA YOGYAKARTA</FitText>
        </h1>
      </header>
      <nav className="flex h-[129px] shrink-0 items-center bg-[#763233] pl-[296px] text-white">
        {MENU.map(([t, w]) => (
          <div key={t} className="w-[282px] pt-[11px] text-[42px] font-semibold"><FitText w={w}>{t}</FitText></div>
        ))}
        <svg viewBox="126 111 228 213" preserveAspectRatio="none" className="ml-auto h-[63px] w-[68px]">
          <ellipse cx="219" cy="197.5" rx="75" ry="70" fill="none" stroke="#fff" strokeWidth="35" />
          <path d="M276,264 Q276,250 290,250 Q302,250 308,256 L350,294 Q357,300 350,307 L337,320 Q330,326 323,320 L281,281 Q276,276 276,264 Z" fill="#fff" />
        </svg>
        <svg viewBox="609 102 240 228" preserveAspectRatio="none" className="ml-[75px] mr-[129px] h-[68px] w-[71px]">
          <ellipse cx="729" cy="216" rx="120" ry="114" fill="#fff" />
          <ellipse cx="729" cy="187" rx="42.5" ry="40" fill="#763233" />
          <path d="M659,271 Q676,246 706,246 Q717,249 729,249 Q741,249 752,246 Q782,246 800,271 Q770,304 729,304 Q688,304 659,271 Z" fill="#763233" />
        </svg>
      </nav>
      <main className="flex items-start pl-[61px] pt-[81px]">
        <section className="w-[1097px] rounded-[44px] bg-[#e0e0e0]">
          <div className="flex h-[183px] items-center rounded-t-[44px] bg-[#763233] pl-[72px] pt-1.5 text-[43px] font-bold text-white">
            <FitText w={454.3}>DAFTAR PUSKESMAS</FitText>
          </div>
          {CLINIC_ROWS.map((r, i) => (
            <div key={r.n}>
              <div className={`flex ${r.h} ${r.pt}`}>
                <div className="w-[145px] text-center text-[44px] font-semibold leading-[60px]">{r.n}</div>
                <div className="ml-[56px]">
                  <div className="text-[44px] font-semibold leading-[60px]"><FitText w={r.title[1]}>{r.title[0]}</FitText></div>
                  <div className={`${r.mt} ml-0.5 text-[26.5px] font-semibold leading-[40.2px]`}>
                    {r.lines.map(([t, w]) => <FitText key={t} w={w}>{t}</FitText>)}
                  </div>
                </div>
              </div>
              {i < 4 && <div className={i === 0 ? "-mr-[3px] h-px bg-[#333]" : "-ml-1 h-px bg-[#333]"} />}
            </div>
          ))}
        </section>
        <section className="ml-[50px] w-[1647px]">
          <CityMap />
          <div className="flex h-[183px] items-center rounded-b-[44px] bg-[#763233] pb-[17px] pl-[146px] text-[43px] font-bold text-white">
            <FitText w={108.3}>PETA</FitText>
          </div>
        </section>
        <section className="ml-[62px] h-[1263px] w-[1118px] rounded-[44px] bg-[#e0e0e0]">
          <div className="flex h-[183px] items-center rounded-t-[44px] bg-[#763233] pl-[82px] pt-3.5 text-[43px] font-bold text-white">
            <FitText w={151.7}>BERITA</FitText>
          </div>
          {NEWS.map(({ Art, row, box, pt, ml, mt, title }, i) => (
            <div key={i} className={`flex pl-[47px] ${row}`}>
              <div className={`${box} w-[431px] shrink-0 overflow-hidden rounded-[18px] border border-[#333] shadow-[0_4px_5px_rgba(0,0,0,0.25)]`}>
                <Art />
              </div>
              <div className={`ml-[25px] ${pt}`}>
                <div className={`text-[40px] font-bold leading-[60px] ${ml}`}>
                  {title.map(([t, w]) => <FitText key={t} w={w}>{t}</FitText>)}
                </div>
                <div className={`flex text-[31px] leading-[46px] ${mt}`}>
                  <div className="w-[339px]"><FitText w={149.3}>70x tampil</FitText></div>
                  <FitText w={142}>11/01/2023</FitText>
                </div>
              </div>
            </div>
          ))}
        </section>
      </main>
    </div>
  );
}
